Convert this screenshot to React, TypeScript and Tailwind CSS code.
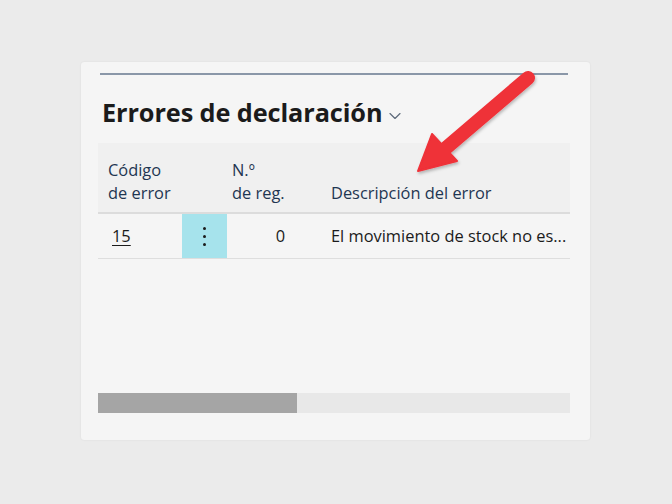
import { ChevronDown } from 'lucide-react';

const font = { fontFamily: '"Open Sans", "Noto Sans", sans-serif' };

// Red callout arrow drawn over the card
const CalloutArrow = () => (
  <svg className="absolute left-0 top-0 pointer-events-none" width="672" height="504" viewBox="0 0 672 504">
    <defs>
      <filter id="arrowShadow" x="-20%" y="-20%" width="140%" height="140%">
        <feDropShadow dx="1" dy="2" stdDeviation="1.5" floodColor="#000" floodOpacity="0.25" />
      </filter>
    </defs>
    <g filter="url(#arrowShadow)" fill="#ef3038" stroke="#ef3038">
      <line x1="528" y1="78" x2="446" y2="148" strokeWidth="14" strokeLinecap="round" />
      <polygon points="418,171 432,134 457,161" strokeWidth="2" strokeLinejoin="round" />
    </g>
  </svg>
);

export default function App() {
  return (
    <div className="relative w-[672px] h-[504px] bg-[#ebebeb] pt-[62px] pl-[81px]" style={font}>
      <div className="w-[509px] h-[378px] bg-[#f5f5f5] rounded-[3px] shadow-[0_0_2px_rgba(0,0,0,0.08)] pl-[17px] pr-[20px] pt-[11px]">
        <div className="mx-[2px] h-[2px] bg-[#8a97a8]" />
        <div className="flex items-center mt-[20px] ml-[4px] h-[36px]">
          <span className="text-[25.3px] font-bold text-[#1b1b1b] tracking-[-0.1px]">Errores de declaración</span>
          <ChevronDown className="ml-[3px] mt-[5px] w-[20px] h-[20px] text-[#5d6a7a]" strokeWidth={1.4} />
        </div>

        {/* column headers */}
        <div className="mt-[12px] h-[71px] bg-[#f0f0f0] border-b-2 border-[#dcdcdc] flex items-end pb-[8px] text-[16.4px] leading-[23px] text-[#1f3652]">
          <div className="w-[84px] pl-[10px]">Código<br />de error</div>
          <div className="w-[45px]" />
          <div className="w-[94px] pl-[5px]">N.º<br />de reg.</div>
          <div className="pl-[10px]">Descripción del error</div>
        </div>

        {/* data row */}
        <div className="h-[45px] border-b border-[#dedede] flex text-[16.4px] text-[#1b1b1b]">
          <div className="w-[84px] pl-[14px] flex items-center">
            <span className="underline underline-offset-[3px]">15</span>
          </div>
          <div className="w-[45px] bg-[#a6e3ec] flex flex-col items-center justify-center gap-[5px]">
            <span className="w-[3px] h-[3px] rounded-full bg-[#1b1b1b]" />
            <span className="w-[3px] h-[3px] rounded-full bg-[#1b1b1b]" />
            <span className="w-[3px] h-[3px] rounded-full bg-[#1b1b1b]" />
          </div>
          <div className="w-[94px] pr-[36px] flex items-center justify-end">0</div>
          <div className="flex-1 pl-[10px] flex items-center whitespace-nowrap overflow-hidden">El movimiento de stock no es...</div>
        </div>

        <div className="h-[134px]" />

        {/* horizontal scrollbar */}
        <div className="h-[20px] bg-[#e8e8e8] flex">
          <div className="w-[199px] h-full bg-[#a5a5a5]" />
        </div>
      </div>
      <CalloutArrow />
    </div>
  );
}
